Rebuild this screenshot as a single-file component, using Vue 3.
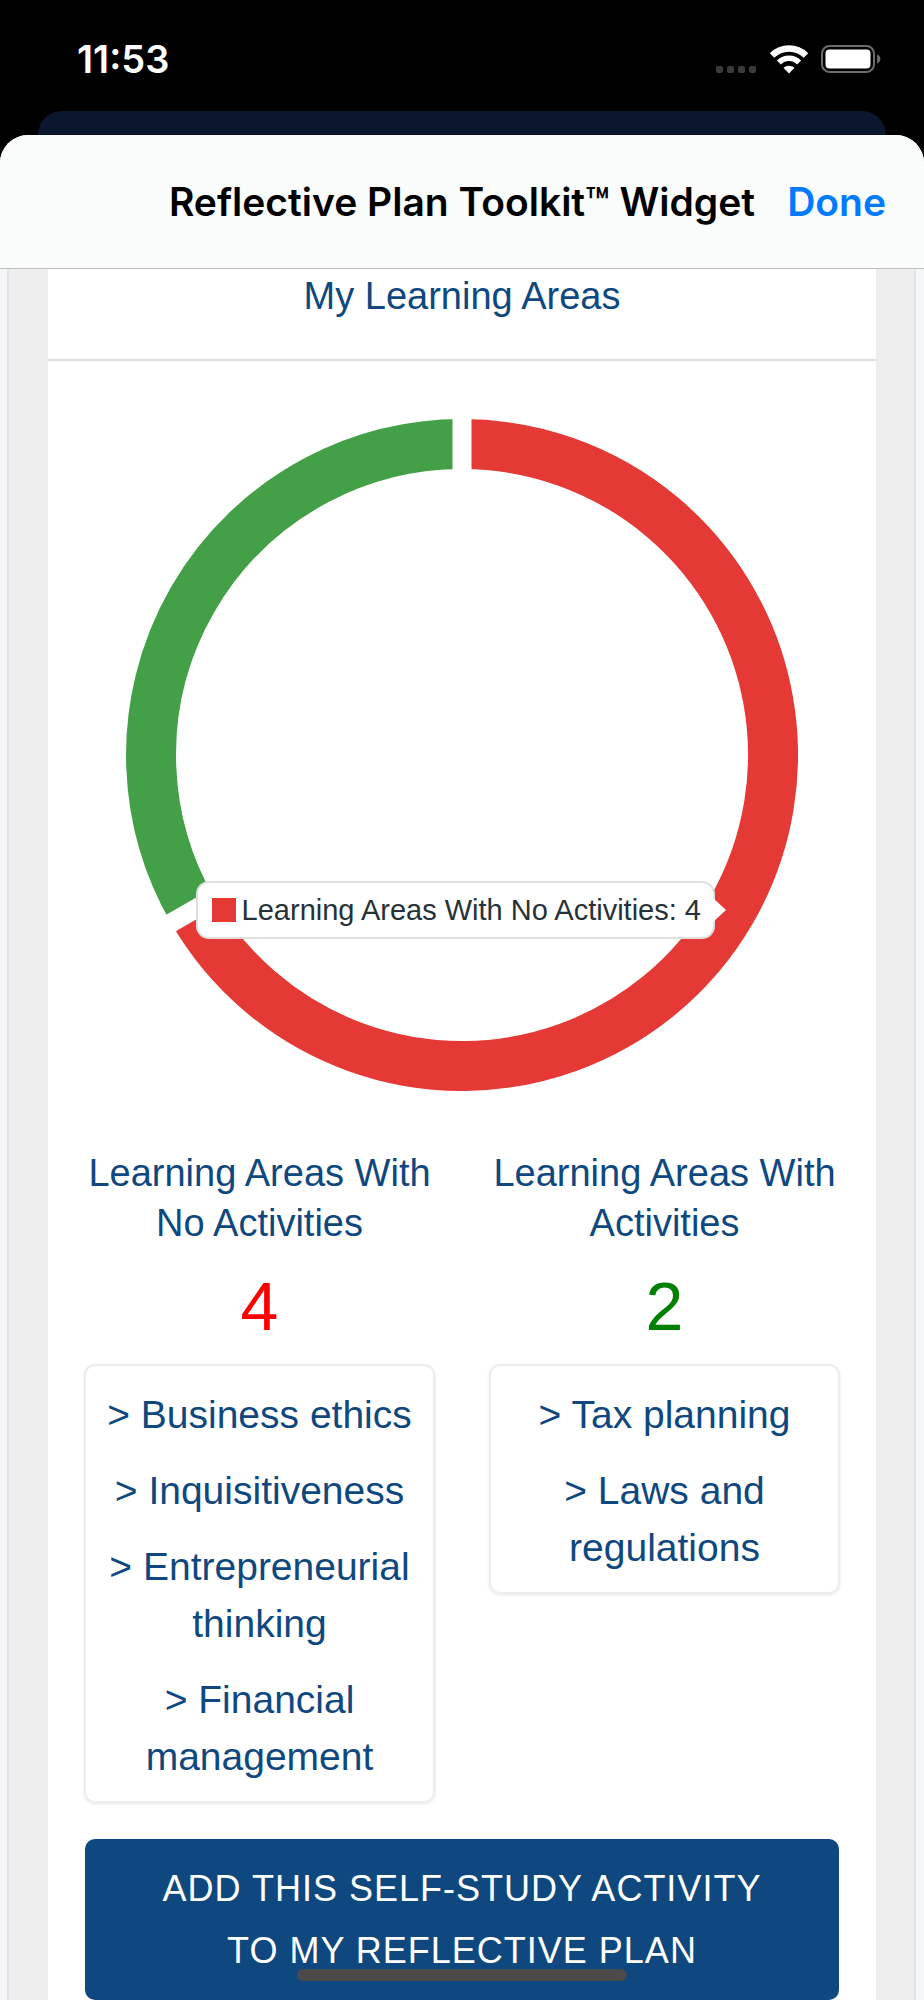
<script setup>
const columns = [
  {
    title: 'Learning Areas With No Activities',
    count: 4,
    tone: 'none',
    areas: ['Business ethics', 'Inquisitiveness', 'Entrepreneurial thinking', 'Financial management'],
  },
  {
    title: 'Learning Areas With Activities',
    count: 2,
    tone: 'some',
    areas: ['Tax planning', 'Laws and regulations'],
  },
]
</script>

<template>
  <div class="screen">
    <div class="status">
      <time class="clock">11:53</time>
      <div class="indicators">
        <svg class="dots" width="41" height="28" viewBox="0 0 41 28" aria-hidden="true">
          <rect v-for="n in 4" :key="n" :x="(n - 1) * 11" y="21" width="7" height="7" rx="2" />
        </svg>
        <svg width="38" height="29" viewBox="0 0 38 29" aria-hidden="true">
          <g fill="none" stroke="#fff">
            <path d="M2 10.6A24 24 0 0 1 36 10.6" stroke-width="6.4" />
            <path d="M8.9 17.5A14.3 14.3 0 0 1 29.1 17.5" stroke-width="5.6" />
          </g>
          <path d="M13.5 22.8C16.5 19.9 21.5 19.9 24.5 22.8L19 28.5Z" fill="#fff" />
        </svg>
        <svg width="60" height="28" viewBox="0 0 60 28" aria-hidden="true">
          <rect x="1" y="1" width="52" height="26" rx="7.5" fill="none" stroke="#6c6c6c" stroke-width="2" />
          <rect x="4.5" y="4.5" width="45" height="19" rx="4" fill="#fff" />
          <path d="M56 9.5C60.5 11 60.5 17 56 18.5Z" fill="#6c6c6c" />
        </svg>
      </div>
    </div>
    <div class="behind"></div>

    <div class="sheet">
      <header class="bar">
        <h1>Reflective Plan Toolkit™ Widget</h1>
        <button type="button" class="done">Done</button>
      </header>

      <div class="page">
        <div class="frame">
          <main class="panel">
            <h2 class="heading">My Learning Areas</h2>

            <div class="chart-area">
              <div class="chart">
                <svg viewBox="0 0 672 672" role="img" aria-label="Learning areas with and without activities">
                  <g fill="none" stroke-width="50">
                    <path d="M336 25A311 311 0 1 1 66.7 491.5" stroke="#e53935" />
                    <path d="M66.7 491.5A311 311 0 0 1 336 25" stroke="#43a047" />
                  </g>
                  <path d="M336 336V-10M336 336L36.4 509" stroke="#fff" stroke-width="19" />
                </svg>
                <div class="tip">
                  <span class="swatch"></span>
                  <span>Learning Areas With No Activities: 4</span>
                </div>
              </div>
            </div>

            <div class="columns">
              <section v-for="column in columns" :key="column.tone" class="column">
                <h3>{{ column.title }}</h3>
                <p class="count" :class="column.tone">{{ column.count }}</p>
                <ul>
                  <li v-for="area in column.areas" :key="area">
                    <a href="#">&gt; {{ area }}</a>
                  </li>
                </ul>
              </section>
            </div>

            <button type="button" class="add">ADD THIS SELF-STUDY ACTIVITY<br />TO MY REFLECTIVE PLAN</button>
          </main>
        </div>
      </div>
    </div>
    <div class="home"></div>
  </div>
</template>

<style>
body {
  margin: 0;
  background: #000;
}
</style>

<style scoped>
* {
  box-sizing: border-box;
}
h1,
h2,
h3,
p,
ul {
  margin: 0;
  padding: 0;
  font-weight: 400;
}
button {
  border: 0;
  cursor: pointer;
}
.screen {
  min-height: 100vh;
  display: flex;
  flex-direction: column;
  background: #000;
  color: #0f487f;
  font-family: "Liberation Sans", Arial, sans-serif;
  font-size: 38px;
}
.status {
  display: flex;
  justify-content: space-between;
  align-items: center;
  padding: 38px 43px 31px 77px;
  color: #fff;
}
.clock {
  font: 600 38px/42px Inter, sans-serif;
}
.indicators {
  display: flex;
  align-items: center;
  gap: 13px;
}
.dots {
  fill: #3a3a3a;
}
.behind {
  height: 24px;
  margin: 0 38px;
  background: #0b162f;
  border-radius: 24px 24px 0 0;
}
.sheet {
  flex: 1;
  display: flex;
  flex-direction: column;
  overflow: hidden;
  background: #f5f6f8;
  border-radius: 28px 28px 0 0;
}
.bar {
  display: grid;
  grid-template-columns: 1fr auto 1fr;
  align-items: center;
  min-height: 134px;
  padding: 0 38px;
  background: #fafbfb;
  border-bottom: 1px solid #bfc1c1;
}
.bar h1 {
  grid-column: 2;
  color: #000;
  font: 600 39px/46px Inter, sans-serif;
  white-space: nowrap;
}
.done {
  justify-self: end;
  padding: 0;
  background: none;
  color: #007aff;
  font: 600 39px/46px Inter, sans-serif;
}
.page {
  flex: 1;
  display: flex;
  padding: 0 8px 0 7px;
}
.frame {
  flex: 1;
  padding: 0 38px 0 39px;
  background: #ededed;
  border: solid #e1e3e6;
  border-width: 0 2px;
}
.panel {
  min-height: 100%;
  background: #fff;
}
.heading {
  padding: 2px 0 38px;
  border-bottom: 2px solid #e0e0e0;
  font-size: 38px;
  line-height: 50px;
  text-align: center;
}
.chart-area {
  padding: 58px 36px 57px;
}
.chart {
  position: relative;
  max-width: 672px;
  margin: 0 auto;
}
.chart svg {
  display: block;
  width: 100%;
}
.tip {
  position: absolute;
  top: 462px;
  right: 83px;
  display: flex;
  align-items: center;
  gap: 6px;
  height: 58px;
  padding: 0 12px 0 14px;
  background: #fff;
  border: 2px solid #dfdfdf;
  border-radius: 13px;
  color: #263238;
  font-size: 29px;
  white-space: nowrap;
}
.tip::after {
  content: "";
  position: absolute;
  left: 100%;
  top: 50%;
  margin-top: -12px;
  border: solid transparent;
  border-width: 12px 0 12px 13px;
  border-left-color: #fff;
}
.swatch {
  width: 24px;
  height: 24px;
  background: #e53935;
}
.columns {
  display: grid;
  grid-template-columns: 1fr 1fr;
  align-items: start;
  gap: 54px;
  padding: 0 36px;
}
.column {
  text-align: center;
}
.column h3 {
  font-size: 38px;
  line-height: 50px;
}
.count {
  margin: 18px 0;
  font-size: 68px;
  line-height: 80px;
}
.count.none {
  color: #f00;
}
.count.some {
  color: #008000;
}
.column ul {
  display: grid;
  gap: 19px;
  padding: 20px 12px 16px;
  border: 2px solid #ededed;
  border-radius: 11px;
  box-shadow: 0 1px 3px rgba(0, 0, 0, 0.1);
  font-size: 39px;
  line-height: 57px;
  list-style: none;
}
.column a {
  color: inherit;
  text-decoration: none;
}
.add {
  display: block;
  width: calc(100% - 74px);
  margin: 36px auto 0;
  padding: 19px 24px 18px;
  background: #0f487f;
  border-radius: 10px;
  color: #fff;
  font-family: inherit;
  font-size: 36px;
  line-height: 62px;
  letter-spacing: 1px;
}
.home {
  position: fixed;
  bottom: 19px;
  left: 50%;
  width: 330px;
  height: 12px;
  margin-left: -165px;
  border-radius: 6px;
  background: #4a4a4a;
}
</style>
